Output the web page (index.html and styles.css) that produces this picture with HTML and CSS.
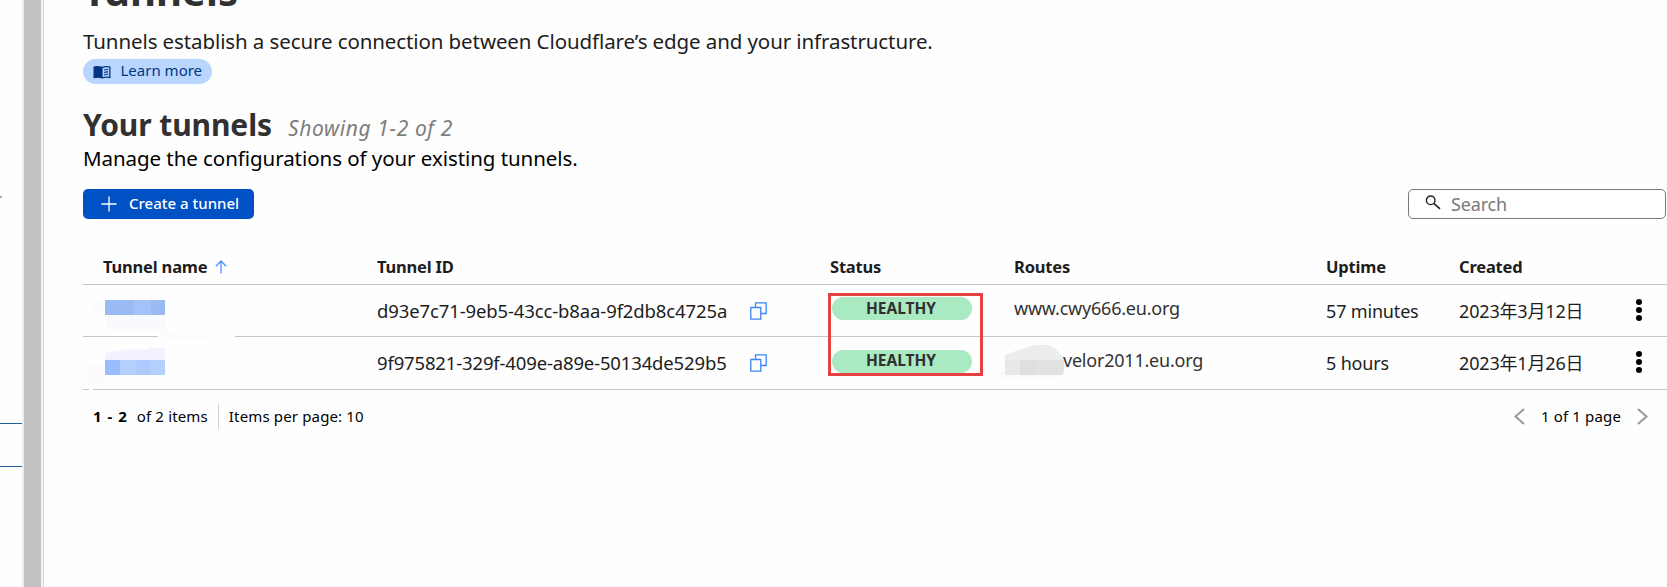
FILE: index.html
```html
<!DOCTYPE html>
<html lang="en">
<head>
<meta charset="utf-8">
<title>Tunnels</title>
<link rel="stylesheet" href="styles.css">
</head>
<body>
<div class="app">
  <aside class="rail">
    <span class="rail-mark"></span>
    <div class="rail-item"></div>
  </aside>
  <div class="scrollbar"></div>
  <main class="main">
    <h1 class="title"><span>Tunnels</span></h1>
    <p class="subtitle"><span>Tunnels establish a secure connection between Cloudflare’s edge and your infrastructure.</span></p>
    <a class="learn">
      <svg class="learn-icon" width="18" height="14" viewBox="0 0 18 14"><path fill="#003681" d="M.5 1.5Q5 .2 9 1.8Q13 .2 17.500 1.500V13.200Q13 12 9 13.500Q5 12 .5 13.200Z"/><path fill="#b9d6ff" d="M9.600 2.900Q12.500 1.700 16.200 2.400V11.700Q12.500 11 9.600 12.100Z"/><path d="M11 5.100Q13 4.300 15.200 4.600M11 7.500Q13 6.700 15.200 7M11 9.900Q13 9.100 15.200 9.400" fill="none" stroke="#003681" stroke-width="1.100"/></svg>
      <span>Learn more</span>
    </a>
    <div class="heading">
      <h2><span>Your tunnels</span></h2>
      <em>Showing 1-2 of 2</em>
    </div>
    <p class="manage"><span>Manage the configurations of your existing tunnels.</span></p>
    <div class="toolbar">
      <button class="create">
        <svg width="16" height="16" viewBox="0 0 16 16"><path d="M8 .5v15M.5 8h15" stroke="#fff" stroke-width="1.300"/></svg>
        <span>Create a tunnel</span>
      </button>
      <div class="search">
        <svg width="16" height="15" viewBox="0 0 16 15"><circle cx="5.700" cy="5.300" r="4.300" fill="none" stroke="#222" stroke-width="1.400"/><path d="M8.800 8.300L15 13.800" stroke="#222" stroke-width="1.600"/></svg>
        <span>Search</span>
      </div>
    </div>
    <section class="table">
      <div class="row head">
        <div class="name">Tunnel name<svg width="12" height="14" viewBox="0 0 12 14"><path d="M6 13.500V1.200M.8 6.200L6 1L11.200 6.200" fill="none" stroke="#4693ff" stroke-width="1.300"/></svg></div>
        <div>Tunnel ID</div><div>Status</div><div>Routes</div><div>Uptime</div><div>Created</div><div></div>
      </div>
      <div class="row first">
        <div class="name"></div>
        <div class="id"><span>d93e7c71-9eb5-43cc-b8aa-9f2db8c4725a</span><svg class="copy" width="17" height="18" viewBox="0 0 17 18"><path d="M5.500 5V.8H16.200V11.500H11.500M.8 5.500H10.800V17.200H.8Z" fill="none" stroke="#3b86f2" stroke-width="1.300"/></svg></div>
        <div class="status"><span class="badge">HEALTHY</span></div>
        <div class="route"><span>www.cwy666.eu.org</span></div>
        <div class="uptime"><span>57 minutes</span></div>
        <div class="date"><span>2023年3月12日</span></div>
        <div class="menu"><i></i><i></i><i></i></div>
      </div>
      <div class="row second">
        <div class="name"></div>
        <div class="id"><span>9f975821-329f-409e-a89e-50134de529b5</span><svg class="copy" width="17" height="18" viewBox="0 0 17 18"><path d="M5.500 5V.8H16.200V11.500H11.500M.8 5.500H10.800V17.200H.8Z" fill="none" stroke="#3b86f2" stroke-width="1.300"/></svg></div>
        <div class="status"><span class="badge">HEALTHY</span></div>
        <div class="route tail"><span>velor2011.eu.org</span></div>
        <div class="uptime"><span>5 hours</span></div>
        <div class="date"><span>2023年1月26日</span></div>
        <div class="menu"><i></i><i></i><i></i></div>
      </div>
      <svg class="redact" width="170" height="120" viewBox="0 0 170 120">
        <path fill="#fff" d="M78 53h77v7H78zM9 106h4v6H9z"/>
        <path fill="#fcfcfd" d="M12 21h13v12H12zM72 52l28-2h54v6l-24 3H90zM8 83h17v20H2V95h6z"/>
        <path fill="#f9fafe" d="M25 35h60v15l-50 1-10-3z"/>
        <path fill="#f1f2fe" d="M25 73l13-2 10-2 17 1 6-2h14v12H25z"/>
        <path fill="#9abaf3" d="M25 20h60v15H25z"/><path fill="#a5c2f8" d="M54 20h17v15H54z"/>
        <path fill="#b4d0ff" d="M25 80h60v15H25z"/><path fill="#99bdff" d="M25 80h15v15H25z"/><path fill="#accbff" d="M56 80h15v15H56z"/>
      </svg>
      <svg class="redact-route" width="66" height="42" viewBox="0 0 66 42">
        <path fill="#fafafa" d="M0 31h58v6l-18 2H0z"/>
        <path fill="#ededed" d="M5 15l13-5 17-5 14 0 10 7 4 5v11q0 7-3 7H5z"/>
        <path fill="#e8e8e8" d="M5 20h15v15H5z"/><path fill="#dfdfdf" d="M20 20h15v15H20z"/><path fill="#e1e1e1" d="M35 20h29v10q0 5-4 5H35z"/>
      </svg>
      <div class="annotation"></div>
    </section>
    <footer class="pager">
      <b>1 - 2</b><span class="total">of 2 items</span><span class="per">Items per page: 10</span>
      <nav>
        <svg width="11" height="17" viewBox="0 0 11 17"><path d="M10 1L1.500 8.500L10 16" fill="none" stroke="#999" stroke-width="2"/></svg>
        <span>1 of 1 page</span>
        <svg width="11" height="17" viewBox="0 0 11 17"><path d="M1 1L9.500 8.500L1 16" fill="none" stroke="#999" stroke-width="2"/></svg>
      </nav>
    </footer>
  </main>
</div>
</body>
</html>
```
FILE: styles.css
```css
* { box-sizing: border-box; }
body { margin: 0; background: #fefefe; color: #1d1d1d; font-family: "Noto Sans", "Noto Sans CJK SC", sans-serif; }
h1, h2, p { margin: 0; }
svg { display: block; flex: none; }
span, em, b { white-space: nowrap; }
.app { display: flex; width: 1667px; height: 587px; overflow: hidden; }
.rail { width: 22px; padding-top: 196px; }
.rail-mark { display: block; width: 2px; height: 2px; background: #aaa; }
.rail-item { margin-top: 225px; height: 44px; border: solid #205b9c; border-width: 1px 0; }
.scrollbar { width: 22px; background: #c1c1c1; border: solid #ededed; border-width: 0 2px; border-right: 0; box-shadow: inset -1px 0 #d6d6d6, inset -3px 0 #f4f4f4; }
.main { flex: 1; min-width: 0; padding-left: 39px; }
.title { margin-top: -29px; line-height: 40px; font-size: 40px; color: #313131; }
.subtitle { margin-top: 15px; line-height: 30px; font-size: 20.5px; letter-spacing: -.1px; }
.learn { display: flex; align-items: center; width: 129px; height: 25px; margin-top: 3px; padding-left: 10px; gap: 9.500px; border-radius: 13px; background: #b9d6ff; color: #003681; font-size: 15px; line-height: 22px; }
.learn span { padding-bottom: 3px; }
.heading { display: flex; align-items: baseline; margin-top: 21px; height: 40px; line-height: 40px; gap: 16px; }
.heading h2 { font-size: 30px; letter-spacing: -.1px; color: #313131; }
.heading em { font-size: 21px; letter-spacing: .6px; color: #7d7d7d; }
.manage { margin-top: -2px; line-height: 30px; font-size: 20.5px; letter-spacing: -.06px; color: #000; }
.toolbar { display: flex; justify-content: space-between; margin-top: 16px; height: 30px; padding-right: 1px; }
.create { display: flex; align-items: center; width: 171px; padding: 0 0 0 18px; gap: 12px; border: 0; border-radius: 5px; background: #0051c3; color: #fff; font: 500 15px/22px "Noto Sans", sans-serif; }
.create span { padding-bottom: 2px; }
.search { display: flex; align-items: center; width: 258px; padding-left: 16px; gap: 10px; border: 1px solid #797979; border-radius: 5px; color: #797979; font-size: 18px; letter-spacing: -.15px; line-height: 26px; background: #fff; }
.search svg { margin-bottom: 3px; }
.table { position: relative; margin-top: 30px; font-size: 18px; letter-spacing: -.17px; }
.row { display: grid; grid-template-columns: 273px 453px 184px 312px 133px 176px 1fr; align-items: center; padding-left: 21px; border-bottom: 1px solid #c6c6c6; line-height: 26px; }
.head { height: 36px; padding-top: 1px; font-size: 16.5px; font-weight: 700; letter-spacing: -.19px; }
.first { height: 52px; }
.second { height: 53px; }
.name, .id { display: flex; align-items: center; }
.name { margin-left: -1px; }
.name svg { margin-left: 8px; }
.first .id, .first .uptime, .first .date { padding-top: 1px; }
.second .id, .second .uptime, .second .date { padding-bottom: 1px; }
.id { font-size: 18.5px; letter-spacing: -.12px; }
.second .id { letter-spacing: -.15px; }
.copy { margin-left: 23px; }
.status { padding-bottom: 4px; }
.badge { display: block; width: 140px; height: 23px; margin-left: 2px; padding-right: 2px; border-radius: 12px; background: #a9eac2; color: #313131; text-align: center; font-size: 15.5px; font-weight: 700; letter-spacing: 0; line-height: 23px; }
.second .badge { line-height: 21px; }
.route { padding-bottom: 6px; color: #333; letter-spacing: -.22px; }
.tail { padding-left: 49px; }
.menu { display: grid; gap: 2px; padding: 0 0 1px 1px; }
.menu i { width: 6px; height: 6px; border-radius: 50%; background: #000; }
.second .menu { padding-bottom: 3px; }
.redact { position: absolute; left: -3px; top: 31px; }
.redact-route { position: absolute; left: 917px; top: 91px; }
.annotation { position: absolute; left: 745px; top: 44px; width: 155px; height: 83px; border: 3px solid #e54141; }
.pager { display: flex; align-items: center; height: 52px; padding: 0 19px 0 10px; color: #000; font-size: 15px; letter-spacing: .15px; line-height: 25px; }
.pager b { letter-spacing: 1px; }
.total { margin-left: 9px; }
.per { margin-left: 10px; padding-left: 10px; border-left: 1px solid #d0d0d0; }
.pager nav { display: flex; align-items: center; margin-left: auto; gap: 16px; }
```
